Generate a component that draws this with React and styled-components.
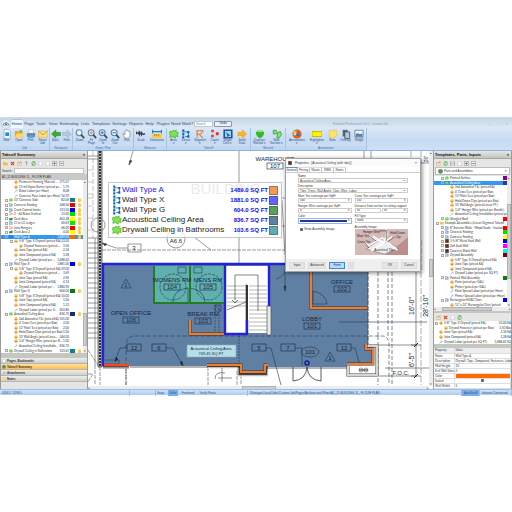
import React from "react";
import styled, { createGlobalStyle, css } from "styled-components";

const GlobalStyle = createGlobalStyle`
  body {
    margin: 0;
    background: #fff;
    font-family: "Liberation Sans", Arial, sans-serif;
    font-size: 3px;
    line-height: 4px;
    color: #333;
  }
  * { box-sizing: border-box; }
  button, input, select {
    font: inherit;
    color: inherit;
    margin: 0;
    padding: 0;
    border: 0;
    border-radius: 0;
    background: none;
    appearance: none;
    min-width: 0;
  }
  svg { display: block; }
`;

const Page = styled.div`
  padding: 117px 0;
`;

const Ribbon = styled.header`
  background: linear-gradient(#d5e3f2, #c3d9f2 30%, #b9d3f0);
  border-bottom: 1px solid #8fb2dc;
`;

const TopBar = styled.div`
  display: flex;
  align-items: center;
  height: 11px;
  padding: 1px 4px 0 1px;
  background: linear-gradient(#c6d5e6, #dce8f5);
  border-top: 1px solid #cfdae6;
`;

const Orb = styled.button`
  width: 10px;
  height: 9px;
`;

const Tab = styled.button`
  flex: 0 0 auto;
  width: ${props => props.$width}px;
  height: 9px;
  font-size: 4px;
  line-height: 8px;
  text-align: center;
  white-space: nowrap;
  color: #2a4d85;
  ${props =>
    props.$active &&
    css`
      background: #f1f7fe;
      border: solid #a9c5e6;
      border-width: 1px 0 0;
      border-radius: 2px 2px 0 0;
    `}
`;

const SearchBox = styled.input`
  width: 19px;
  height: 6px;
  margin-left: 1px;
  padding: 0 1px;
  background: #fff;
  border: 1px solid #bccbdc;
  &::placeholder { color: #777; opacity: 1; }
`;

const UndoButton = styled.button`
  width: 18px;
  height: 6px;
  margin-left: 1px;
  border: 1px solid #8c98a6;
  border-radius: 1px;
  background: #edf0f4;
  line-height: 3px;
`;

const AppTitle = styled.div`
  flex: 1;
  min-width: 0;
  padding: 0 4px;
  text-align: center;
  white-space: nowrap;
  color: #8b98a8;
`;

const WindowButtons = styled.div`
  display: flex;
  gap: 7px;
  color: #77869a;
`;

const Tools = styled.div`
  display: flex;
  height: 22px;
  background: linear-gradient(#d9e7f7, #c5daf3 60%, #cfe1f6);
`;

const ToolGroup = styled.div`
  display: flex;
  flex-direction: column;
  justify-content: space-between;
  border-right: 1px solid #a6c2e4;
`;

const ToolRow = styled.div`
  display: flex;
`;

const GroupLabel = styled.div`
  text-align: center;
  color: #4c6f9f;
  background: #bfd7f2;
`;

const ToolButton = styled.button`
  display: flex;
  flex-direction: column;
  align-items: center;
  width: ${props => props.$width}px;
  padding-top: 1px;
  line-height: 3px;
  text-align: center;
  white-space: nowrap;
  color: #2f4e7c;
  svg {
    width: 10px;
    height: 10px;
  }
`;

const Body = styled.main`
  display: grid;
  grid-template-columns: 88px minmax(0, 1fr) 79px;
`;

const Panel = styled.aside`
  display: flex;
  flex-direction: column;
  min-width: 0;
  background: #e4e4e2;
  border: solid #9a9a98;
  border-width: 0 1px;
`;

const PanelTitle = styled.div`
  display: flex;
  justify-content: space-between;
  height: 8px;
  padding: 0 2px 0 1px;
  font-size: 4px;
  line-height: 8px;
  font-weight: bold;
  color: #111;
  background: linear-gradient(#e8e8e6, #c2c2be);
  border-bottom: 1px solid #a5a5a2;
`;

const PanelTools = styled.div`
  display: flex;
  align-items: center;
  gap: 2px;
  height: 8px;
  padding: 0 2px;
  background: #e6e6e4;
`;

const IconButton = styled.button`
  width: 5px;
  height: 5px;
  svg {
    width: 5px;
    height: 5px;
  }
`;

const SearchRow = styled.label`
  display: flex;
  align-items: center;
  gap: 2px;
  height: 7px;
  padding: 0 3px 0 1px;
  input {
    flex: 1;
    height: 6px;
    background: #fff;
    border: 1px solid #c5c5c5;
  }
`;

const FileSelect = styled.select`
  width: 100%;
  height: 6px;
  padding: 0 1px;
  color: #333;
  background: #c9c9c6;
`;

const AssemblySelect = styled.div`
  display: flex;
  align-items: center;
  height: 8px;
  margin: 0 1px 1px;
  padding: 0 2px;
  gap: 1px;
  background: #fff;
  border: 1px solid #bbb;
  svg {
    width: 5px;
    height: 5px;
  }
  select { flex: 1; }
`;

const TreeFrame = styled.div`
  display: flex;
  height: ${props => props.$height}px;
  background: #fff;
`;

const TreeList = styled.ul`
  flex: 1;
  min-width: 0;
  display: flex;
  flex-direction: column;
  margin: 0;
  padding: 0;
  list-style: none;
  font-family: Lato, "Liberation Sans", sans-serif;
`;

const TreeItem = styled.li`
  flex: 1 1 0;
  min-height: 0;
  display: flex;
  align-items: center;
  padding-left: ${props => props.$level * 5 + props.$indent}px;
  gap: 1px;
  white-space: nowrap;
  color: ${props => (props.$selected ? "#fff" : "#333")};
  background: ${props => (props.$selected ? "#3399ee" : "none")};
  svg {
    flex: none;
    width: 4px;
    height: 4px;
  }
`;

const Expander = styled.span`
  flex: none;
  width: 3px;
  height: 3px;
  border: ${props => (props.$shown ? "1px solid #aaa" : "0")};
`;

const ItemLabel = styled.span`
  flex: 1;
  min-width: 0;
`;

const ItemValue = styled.span`
  flex: none;
  text-align: right;
`;

const Swatch = styled.span`
  flex: none;
  width: ${props => (props.$wide ? 5 : 4)}px;
  height: 4px;
  background: ${props => props.$color || "transparent"};
`;

const Bulb = styled.span`
  flex: none;
  width: 3px;
  height: 4px;
  margin: 0 2px;
  border-radius: 2px 2px 1px 1px;
  background: ${props => (props.$on ? "#ffc94a" : "transparent")};
`;

const Scrollbar = styled.div`
  flex: none;
  display: flex;
  flex-direction: ${props => (props.$horizontal ? "row" : "column")};
  justify-content: space-between;
  align-items: center;
  width: ${props => (props.$horizontal ? "100%" : "4px")};
  height: ${props => (props.$horizontal ? "4px" : "auto")};
  background: #ececec;
  color: #444;
`;

const Thumb = styled.span`
  width: ${props => props.$width || 4}px;
  height: ${props => props.$height || 4}px;
  margin: ${props => props.$margin || "0"};
  background: #cdcdcd;
  border: 1px solid #b2b2b2;
`;

const Splitter = styled.div`
  height: ${props => props.$size || 2}px;
  background: #c6c6c3;
`;

const NavButton = styled.button`
  display: flex;
  align-items: center;
  gap: 1px;
  width: 100%;
  height: 6px;
  padding: 0 1px;
  font-weight: bold;
  border-bottom: 1px solid #b5b5b2;
  background: ${props =>
    props.$active ? "linear-gradient(#ffe2a0, #ffbd4a)" : "linear-gradient(#ededeb, #cfcfcc)"};
  svg {
    width: 4px;
    height: 4px;
  }
`;

const PropertyTable = styled.table`
  flex: 1;
  width: 100%;
  table-layout: fixed;
  border-collapse: collapse;
  background: #fff;
  font-family: Lato, "Liberation Sans", sans-serif;
  th, td {
    height: 5px;
    padding: 0 0 0 1px;
    line-height: 4px;
    font-weight: normal;
    text-align: left;
    white-space: nowrap;
    border: 1px solid #dedede;
    border-width: 0 1px 1px 0;
  }
  th:first-child { width: 20px; }
  thead th { background: #eee; }
`;

const ColorCell = styled.span`
  display: block;
  height: 4px;
  background: #ff6a00;
`;

const CheckBox = styled.input`
  display: block;
  width: 3px;
  height: 3px;
  border: 1px solid #777;
  background: ${props => (props.checked ? "#444" : "#fff")};
  td & { margin: 0 auto; }
`;

const Canvas = styled.section`
  position: relative;
  display: grid;
  grid-template-columns: minmax(0, 1fr) 4px;
  grid-template-rows: auto 3px;
  background: #fff;
  overflow: hidden;
`;

const Drawing = styled.svg`
  width: 100%;
  height: 234px;
`;

const Legend = styled.div`
  position: absolute;
  left: 20px;
  top: 31px;
  display: flex;
  flex-direction: column;
  width: 174px;
  padding: 2px 3px;
  background: rgba(255, 255, 255, 0.75);
  border: 1px solid #c6c6c6;
`;

const LegendRow = styled.div`
  display: flex;
  align-items: center;
  height: 10px;
  font-size: 8px;
  line-height: 10px;
  color: ${props => (props.$selected ? "#1717ee" : "#1c1c22")};
  white-space: nowrap;
  svg {
    width: 10px;
    height: 10px;
  }
`;

const LegendValue = styled.span`
  margin-left: auto;
  font-size: 6px;
  font-weight: bold;
  color: #1010f0;
`;

const LegendColor = styled.span`
  width: 9px;
  height: 9px;
  margin-left: 1px;
  border: 1px solid rgba(60, 60, 60, 0.4);
  background: ${props => props.$color};
`;

const Dialog = styled.section`
  position: absolute;
  left: 197px;
  top: 7px;
  width: 136px;
  background: #fff;
  border: 1px solid #a2a2a2;
  box-shadow: 1px 1px 4px rgba(0, 0, 0, 0.5);
`;

const DialogTitle = styled.div`
  display: flex;
  align-items: center;
  gap: 3px;
  height: 8px;
  padding: 0 3px 0 2px;
  background: #fbfbfb;
  svg {
    width: 4px;
    height: 4px;
  }
  button { margin-left: auto; font-size: 4px; }
`;

const DialogTabs = styled.div`
  display: flex;
  border-bottom: 1px solid #ccc;
`;

const DialogTab = styled.button`
  width: 12px;
  height: 5px;
  border-right: 1px solid #c5c5c5;
  border-top: 1px solid ${props => (props.$active ? "#5599dd" : "#ddd")};
  line-height: 4px;
`;

const Form = styled.div`
  display: grid;
  grid-template-columns: 1fr 1fr;
  gap: 1px 3px;
  padding: 1px 12px 4px;
`;

const Field = styled.div`
  grid-column: ${props => (props.$full ? "1 / -1" : "auto")};
  display: flex;
  flex-direction: column;
  label {
    white-space: nowrap;
  }
`;

const fieldBox = css`
  flex: 1;
  height: 5px;
  padding: 0 1px;
  background: #fff;
  border: 1px solid #ccc;
  line-height: 3px;
`;

const TextBox = styled.input`
  ${fieldBox}
`;

const SelectBox = styled.select`
  ${fieldBox}
`;

const Control = styled.div`
  position: relative;
  display: flex;
  gap: 1px;
`;

const DropMark = styled.span`
  position: absolute;
  right: 2px;
  top: 0;
  line-height: 5px;
  pointer-events: none;
`;

const ColorButton = styled.button`
  flex: 1;
  height: 6px;
  border: 1px solid #8dbcec;
  padding: 1px 4px 1px 1px;
  background: #31318f content-box;
`;

const CheckLabel = styled.label`
  display: flex;
  align-items: center;
  gap: 1px;
  align-self: start;
  padding: 2px 0 0 2px;
`;

const AssemblyPicture = styled.svg`
  width: 100%;
  height: 26px;
`;

const DialogFooter = styled.div`
  display: flex;
  align-items: center;
  gap: 3px;
  height: 12px;
  padding: 0 3px;
  background: #efefef;
`;

const DialogButton = styled.button`
  width: ${props => props.$width || 16}px;
  height: 7px;
  margin-left: ${props => (props.$push ? "auto" : "0")};
  border: 1px solid ${props => (props.$active ? "#3a8ad8" : "#dcdcdc")};
  background: ${props => (props.$active ? "#b9dcfa" : "#e5e5e5")};
`;

const StatusBar = styled.footer`
  display: grid;
  grid-template-columns: 130px 26px 92px 1fr 18px 32px;
  height: 6px;
  line-height: 6px;
  color: #29518b;
  background: linear-gradient(#d3e4f8, #abcbf0);
  border-top: 1px solid #9dbce0;
  white-space: nowrap;
`;

const StatusCell = styled.span`
  padding-left: 2px;
  border-right: 1px solid #9fbee3;
  background: ${props => (props.$active ? "#78aee9" : "none")};
`;

const StatusOptions = styled.span`
  display: flex;
  gap: 3px;
  border-right: 1px solid #9fbee3;
`;

const StatusToggle = styled.button`
  padding: 0 1px;
  background: ${props => (props.$active ? "#78aee9" : "none")};
`;

const cube = (
  <>
    <path d="M3 7 12 2l9 5v11l-9 5-9-5z" fill="#e5942c" />
    <path d="m3 7 9 5 9-5-9-5z" fill="#ffd083" />
  </>
);
const nodes = (
  <>
    <path d="M5 3v18M5 7h13v11h-8" fill="none" stroke="#1879c4" strokeWidth="2" />
    <path d="M3 1h5v5H3zM3 10h5v5H3zM3 18h5v5H3zM15 5h5v5h-5zM15 15h5v6h-5z" fill="#0f67b2" />
  </>
);
const area = (
  <path d="M2 6h5l2-3 5 2 3-3v5l6 2-3 5 2 4-7-1v5l-7-4-6 2 1-6-2-3z" fill="#7fe34f" stroke="#3da42b" strokeWidth="1.5" />
);
const lens = (
  <>
    <circle cx="10" cy="9" r="7" fill="#e3f3ff" stroke="#68809c" strokeWidth="2.5" />
    <path d="m15 14 7 8" stroke="#3c4654" strokeWidth="4" />
  </>
);
const page = <path d="M5 1h10l5 5v17H5z" fill="#fff" stroke="#7f9cc1" strokeWidth="1.5" />;
const note = <path d="M3 3h18v12l-6 6H3z" fill="#ffe06a" stroke="#dcae2b" />;

const ICONS = {
  cube,
  nodes,
  area,
  note,
  page,
  new: <>{page}<path d="M8 8h9v9H8z" fill="#2788dc" /></>,
  open: <><path d="M2 5h8l2 3h9v13H2z" fill="#e9a62f" /><path d="M6 11h17l-4 10H2z" fill="#ffd767" /><path d="M13 3h7v5h-7z" fill="#5cbd4b" /></>,
  print: <><path d="M7 2h11v8H7z" fill="#fff" stroke="#96a5b8" /><path d="M2 10h20v9H2z" fill="#6f8296" /><path d="M6 15h12v7H6z" fill="#4ba9ef" /></>,
  mail: <><path d="M1 5h22v15H1z" fill="#ffe07c" stroke="#d6a52b" /><path d="m1 5 11 9L23 5" fill="none" stroke="#c89422" strokeWidth="2" /></>,
  back: <path d="M1 12 12 2v6h11v8H12v6z" fill="#38ae30" stroke="#21821d" />,
  forward: <path d="M23 12 12 2v6H1v8h11v6z" fill="#b9c9dc" stroke="#97abc3" />,
  lens,
  fit: <>{lens}<path d="M10 5v8M6 9h8" stroke="#e37230" strokeWidth="2" /></>,
  zoomIn: <>{lens}<path d="M10 5v8M6 9h8" stroke="#277fd2" strokeWidth="2.5" /></>,
  zoomOut: <>{lens}<path d="M6 9h8" stroke="#277fd2" strokeWidth="2.5" /></>,
  hand: <path d="M7 22 2 12l3-1 2 3V5l3-1V2h3v2h3v2h3v10l-3 6z" fill="#fff" stroke="#7b7b7b" strokeWidth="1.5" />,
  scale: <path d="M1 6v5l4-2 3 5V7l5 7V8l4 5 5-2" fill="none" stroke="#3d434b" strokeWidth="3" />,
  dimension: <><path d="M1 2v9M23 2v9M2 6h20" stroke="#2878bb" strokeWidth="3" /><path d="M1 12h22v10H1z" fill="#ffc833" /><path d="M6 12v5M11 12v5M16 12v5" stroke="#8a6516" strokeWidth="1.5" /></>,
  segment: <path d="M5 22V4h15M5 13h6l9-7M11 13l8 9" fill="none" stroke="#e07822" strokeWidth="3" strokeDasharray="4 1" />,
  count: <path d="M3 2h6v6H3zM3 14h6v6H3zM14 8h7v7h-7z" fill="#e83423" />,
  single: <><path d="M3 3h18v18H3z" fill="#b8d3ee" stroke="#165797" strokeWidth="4" /><path d="m8 7 10 9-5 1-2 4z" fill="#2368a6" /></>,
  send: <path d="M23 12 13 2v6H2v8h11v6z" fill="#ffb51e" stroke="#e28b0d" />,
  record: <><path d="M2 9c2-8 18-8 20 0-1 8-7 13-10 13S3 17 2 9z" fill="#35b82b" /><path d="M5 7c3-5 11-5 14 0z" fill="#98ea75" /></>,
  section: <path d="M3 3h7l2 5-3 4H3zM13 9l7-3 3 7-6 9h-5z" fill="#86e36a" stroke="#36a13a" strokeWidth="2" />,
  annotate: <><circle cx="12" cy="12" r="11" fill="#e85b26" /><path d="M4 8h7v7H4z" fill="#ffe051" /><path d="m12 6 7 11h-9z" fill="#2874c8" /><path d="M3 4h8v4H3z" fill="#9ce064" /></>,
  highlight: <path d="M0 6h24v12H0z" fill="#fff200" stroke="#c0b000" strokeWidth="2" />,
  overlay: <><path d="M4 2h12v16H4z" fill="#596875" /><path d="M9 7h12v16H9z" fill="#b6c8d7" stroke="#3c5162" strokeWidth="2" /></>,
  image: <><path d="M2 3h20v15H2z" fill="#e8f3fa" stroke="#687d93" strokeWidth="2" /><path d="M4 13c5-8 9 3 16-3v7H4z" fill="#4686c2" /><path d="M1 20h22v3H1z" fill="#8e9eae" /></>,
  labor: <path d="M3 22 15 9M14 3l-2 5 4 4 6-2" fill="none" stroke="#4b8fd0" strokeWidth="3" />,
  deck: <path d="M1 7h8l3-3h10l-2 16H1z" fill="#2d8a35" />,
  block: <path d="M2 2h20v20H2zM2 12h20M12 2v20" fill="#703b2a" stroke="#40221a" strokeWidth="2" />,
  folder: <path d="M1 4h9l2 4h11v13H1z" fill="#f5bd3f" />,
  remove: <path d="m4 4 16 16M20 4 4 20" stroke="#e03820" strokeWidth="5" />,
  refresh: <path d="M4 13a8 8 0 0 1 14-7M20 10a8 8 0 0 1-14 8M18 1v7h-7M6 22v-7h7" fill="none" stroke="#41a93e" strokeWidth="3.5" />,
  plus: <><path d="M2 2h20v20H2z" fill="#f5f5f5" stroke="#666" strokeWidth="2" /><path d="M12 6v12M6 12h12" stroke="#444" strokeWidth="3" /></>,
  minus: <><path d="M2 2h20v20H2z" fill="#f5f5f5" stroke="#666" strokeWidth="2" /><path d="M6 12h12" stroke="#444" strokeWidth="3" /></>,
  edit: <><path d="M2 6h18v16H2z" fill="#fff0bd" stroke="#9e977e" strokeWidth="2" /><path d="m8 15 12-13" stroke="#ed8528" strokeWidth="4" /></>,
  brackets: <path d="M7 2H3v20h4M17 2h4v20h-4M8 12h8" fill="none" stroke="#777" strokeWidth="2.5" />,
  up: <path d="M12 2v19M5 9l7-7 7 7" fill="none" stroke="#788aa0" strokeWidth="3" />,
  pie: <><circle cx="12" cy="12" r="11" fill="#35a94a" /><path d="M12 1a11 11 0 0 1 11 11H12z" fill="#3286d8" /><path d="M1 12A11 11 0 0 1 12 1v11z" fill="#e54632" /></>,
  orb: <><ellipse cx="12" cy="12" rx="11" ry="10" fill="#e9f0f8" stroke="#a6bad1" /><path d="M5 16a7 7 0 0 1 14 0M9 16a3 3 0 0 1 6 0M12 9v7" fill="none" stroke="#527294" strokeWidth="2" /></>
};

const Icon = ({ name }) => (
  <svg viewBox="0 0 24 24" aria-hidden="true">
    {ICONS[name]}
  </svg>
);

const TABS = [
  ["Home", 12], ["Page", 12], ["Tools", 12], ["View", 12], ["Estimating", 20], ["Lists", 12],
  ["Templates", 20], ["Settings", 17], ["Reports", 16], ["Help", 11], ["Plugins", 16], ["Need Work?", 22]
];

const GROUPS = [
  ["Job", [["New", "new", 13], ["Open", "open", 12], ["Print", "print", 11], ["Smart\nJob", "mail", 13]]],
  ["Navigator", [["Back", "back", 11], ["Find", "forward", 11]]],
  ["Zoom / Pan", [["Zoom", "lens", 13], ["Fit\nPage", "fit", 11], ["Zoom\nIn", "zoomIn", 12], ["Zoom\nOut", "zoomOut", 12], ["Pan", "hand", 12]]],
  ["Measure", [["Scale", "scale", 14], ["Dimension", "dimension", 18]]],
  ["Takeoff", [["Area\n▾", "area", 13], ["Linear\n▾", "nodes", 12], ["Segment\n▾", "segment", 16], ["Count\n▾", "count", 13], ["Single\nClick ▾", "single", 13], ["Send\nData", "send", 16]]],
  ["Record", [["Digitizer\nRecord ▾", "record", 17], ["New\nSection ▾", "section", 17]]],
  ["Annotations", [["Annotations\n▾", "annotate", 22], ["Highlighter\n▾", "highlight", 18], ["Note", "note", 13], ["Overlay", "overlay", 13], ["Image", "image", 14]]]
];

// level, icon, label, value, colour, selected
const TAKEOFF = [
  [1, "cube", "Perimeter Forming Material ...", "271.07"],
  [1, "cube", "15 mil Vapor Barrier (priced pe...", "1.75"],
  [1, "labor", "Rebar Labor (per Hour)", "8.08"],
  [1, "labor", "Concrete Pour Labor (per Hour)", "14.39"],
  [0, "area", "10\" Concrete Slab", "82.06", "#168080"],
  [0, "nodes", "Concrete Footing", "248.06", "#f00000"],
  [0, "nodes", "Crack Control Joints", "223.50", "#0000f0"],
  [0, "count", "2 - #4 Rebar Vertical", "23.00", "#00e000"],
  [0, "deck", "Deck Area", "662.28", "#ffff00"],
  [0, "nodes", "CJ In LO Ledger", "60.65", "#00f000"],
  [0, "count", "Joist Hangers", "46.00", "#f00000"],
  [0, "deck", "Deck Area 2", "0.00", "#ffff00"],
  [0, "nodes", "Wall Type A", "1,489.00", "#ff6a00", true],
  [1, "cube", "5/8\" Type X Drywall (priced EA)", "23.00"],
  [2, "cube", "Drywall Fasteners (priced ...", "3.50"],
  [1, "cube", "Joint Tape (priced EA)", "2.34"],
  [1, "cube", "Joint Compound (priced EA)", "3.28"],
  [1, "labor", "Drywall Labor (priced per ...", "1,488.40"],
  [0, "nodes", "Wall Type X", "1,881.00", "#0000f0"],
  [1, "cube", "5/8\" Type X Drywall (priced EA)", "29.00"],
  [2, "cube", "Drywall Fasteners (priced ...", "3.69"],
  [1, "cube", "Joint Tape (priced EA)", "2.96"],
  [1, "cube", "Joint Compound (priced EA)", "4.14"],
  [1, "labor", "Drywall Labor (priced per ...", "1,880.90"],
  [0, "nodes", "Wall Type G", "604.00", "#107810"],
  [1, "cube", "5/8\" Type X Drywall (priced EA)", "10.00"],
  [1, "cube", "Joint Tape (priced EA)", "1.00"],
  [1, "cube", "Joint Compound (priced EA)", "1.33"],
  [1, "labor", "Drywall Labor (priced per S...", "603.80"],
  [0, "area", "Acoustical Ceiling Area", "836.70", "#103070"],
  [1, "cube", "2x4 Acoustical Tile (priced EA)", "105.00"],
  [1, "cube", "4' Cross Tees (priced per Box)", "2.00"],
  [1, "cube", "12' Main Tees (priced per Box)", "2.00"],
  [1, "cube", "Hold Down Clips (priced per Box)", "1.00"],
  [1, "cube", "10' Wall Angle (priced Linea...", "244.00"],
  [1, "cube", "1/4\" Hanger Wire (priced per B...", "1.00"],
  [1, "labor", "Acoustical Ceiling Installatio...", "836.70"],
  [0, "area", "Drywall Ceiling in Bathrooms", "103.61", "#168080"]
];

const PARTS = [
  [1, "area", "Painted Surface", "", "#800080"],
  [1, "area", "Acoustical Ceiling Area", "", "#3333a0", true],
  [2, "cube", "2x4 Acoustical Tile (priced EA)"],
  [2, "cube", "4' Cross Tees (priced per Box)"],
  [2, "cube", "12' Main Tees (priced per Box)"],
  [2, "cube", "Hold Down Clips (priced per Box)"],
  [2, "cube", "10' Wall Angle (priced Linear FT)"],
  [2, "cube", "1/4\" Hanger Wire (priced per Bundle)"],
  [2, "labor", "Acoustical Ceiling Installation (priced per"],
  [1, "area", "Shingled Roof", "", "#f00000"],
  [0, "folder", "Example Assemblies (Linear/Segment Takeoff"],
  [1, "nodes", "8\" Exterior Walls - Wood Studs - Insulate", "", "#f00000"],
  [1, "nodes", "Concrete Footing", "", "#00e000"],
  [1, "nodes", "Concrete Footing", "", "#ffff00"],
  [1, "block", "3-5/8\" Metal Stud Wall", "", "#0000f0"],
  [1, "block", "2x6 Stud Wall", "", "#ff00ff"],
  [1, "block", "Concrete Block Wall", "", "#00f0f0"],
  [1, "nodes", "Drywall Assembly", "", "#800000"],
  [2, "cube", "5/8\" Type X Drywall (priced EA)"],
  [2, "cube", "Joint Tape (priced EA)"],
  [2, "cube", "Joint Compound (priced EA)"],
  [2, "labor", "Drywall Labor (priced per SQ FT)"],
  [1, "nodes", "Painted Wall Assembly", "", "#107810"],
  [2, "cube", "Paint (priced per GAL)"],
  [2, "cube", "Primer (priced per GAL)"],
  [2, "labor", "Paint Spread Labor (priced per Hour)"],
  [2, "labor", "Primer Spread Labor (priced per Hour)"],
  [1, "nodes", "Rectangular HVAC Duct", "", "#0000f0"],
  [2, "cube", "12\" x 10\" Rectangular Duct (priced"]
];

const INPUTS = [
  [0, "cube", "5/8\" Type X Drywall (priced EA)", "23.00 EA"],
  [1, "cube", "Drywall Fasteners (priced per Box)", "3.50 Box"],
  [0, "cube", "Joint Tape (priced EA)", "2.34 EA"],
  [0, "cube", "Joint Compound (priced EA)", "3.28 EA"],
  [0, "labor", "Drywall Labor (priced per SQ FT)", "1,488.40 SQ"]
];

const LEGEND = [
  ["nodes", "Wall Type A", "1489.0 SQ FT", "#f39a55", true],
  ["nodes", "Wall Type X", "1881.0 SQ FT", "#6464f8"],
  ["nodes", "Wall Type G", "604.0 SQ FT", "#5a9f5c"],
  ["area", "Acoustical Ceiling Area", "836.7 SQ FT", "#6080a3"],
  ["area", "Drywall Ceiling in Bathrooms", "103.6 SQ FT", "#5faeae"]
];

function Tree({ items, height, indent, bulbs, scroll }) {
  return (
    <TreeFrame $height={height}>
      <TreeList>
        {items.map(([level, icon, label, value, color, selected], i) => (
          <TreeItem key={i} $level={level} $indent={indent} $selected={selected}>
            <Expander $shown={!!color || items[i + 1]?.[0] > level} />
            <Icon name={icon} />
            <ItemLabel>{label}</ItemLabel>
            {value && <ItemValue>{value}</ItemValue>}
            {(bulbs || color) && <Swatch $color={color} $wide={bulbs} />}
            {bulbs && <Bulb $on={!!color} />}
          </TreeItem>
        ))}
      </TreeList>
      {scroll && (
        <Scrollbar>
          <span>▴</span>
          <Thumb $height={scroll.size} $margin={scroll.margin} />
          <span>▾</span>
        </Scrollbar>
      )}
    </TreeFrame>
  );
}

function PanelIcons({ names }) {
  return (
    <PanelTools>
      {names.map((name, i) => (
        <IconButton key={i} aria-label={name}>
          <Icon name={name} />
        </IconButton>
      ))}
    </PanelTools>
  );
}

function TopRibbon() {
  return (
    <Ribbon>
      <TopBar>
        <Orb aria-label="Application menu"><Icon name="orb" /></Orb>
        {TABS.map(([label, width], i) => (
          <Tab key={label} $width={width} $active={i === 0}>{label}</Tab>
        ))}
        <SearchBox placeholder="Search" aria-label="Search commands" />
        <UndoButton>Undo</UndoButton>
        <AppTitle>PlanSwift Professional 10.0 - Custom Job</AppTitle>
        <WindowButtons>
          <button aria-label="Minimize">–</button>
          <button aria-label="Maximize">□</button>
          <button aria-label="Close window">×</button>
        </WindowButtons>
      </TopBar>
      <Tools>
        {GROUPS.map(([name, tools]) => (
          <ToolGroup key={name}>
            <ToolRow>
              {tools.map(([label, icon, width]) => (
                <ToolButton key={label} $width={width}>
                  <Icon name={icon} />
                  {label.split("\n").map(line => <span key={line}>{line}</span>)}
                </ToolButton>
              ))}
            </ToolRow>
            <GroupLabel>{name}</GroupLabel>
          </ToolGroup>
        ))}
      </Tools>
    </Ribbon>
  );
}

const RoomTag = ({ x, y, name, number }) => (
  <g>
    <text x={x} y={y} fontSize="6">{name}</text>
    <rect x={x - 8} y={y + 2} width="16" height="6" fill="none" stroke="#14273e" strokeWidth=".6" />
    <text x={x} y={y + 7} fontSize="6">{number}</text>
  </g>
);

const KeyTag = ({ x, children }) => (
  <g>
    <rect x={x - 7} y="344" width="14" height="7" fill="none" stroke="#14273e" strokeWidth=".6" />
    <text x={x} y="350" fontSize="6">{children}</text>
  </g>
);

const range = (start, end, step) => {
  const out = [];
  for (let n = start; n < end; n += step) out.push(n);
  return out;
};

function FloorPlan() {
  return (
    <Drawing viewBox="88 151 341 234" preserveAspectRatio="xMinYMin slice">
      <g fill="none" stroke="#555" strokeWidth=".6">
        <path d="M88 156h10M88 159h10M239 151v112M133 151l-4 14M364 151v8M371 151v8M430 163h-9" />
        <path d="m129 165 1-5 2 1z" fill="#333" />
        <path d="M102 250h183" strokeDasharray="4 1" />
        <path d="M102 243l14 5h12M194 237l17 13M282 200l3 55M282 226h5M282 198h5" />
        <path d="m102 243 5 1-2 2z" fill="#333" />
        <circle cx="98" cy="225" r="7" />
        <circle cx="176" cy="239" r="9" />
        <rect x="128" y="244" width="13" height="8" />
        <path d="M93 151v87M88 198h5" strokeDasharray="5 2" stroke="#999" />
        {range(238, 342, 5).map(y => <path key={y} d={`M88 ${y}h10`} />)}
        {range(170, 236, 12).map(y => <path key={y} d={`M88 ${y}h5`} stroke="#aaa" />)}
        <path d="M95 238v127" />
        <path d="M88 350l10 15M95 365v20M100 367v18M126 367v18M208 367v18M237 371v14M241 375v10M88 374h5l-5 8" strokeDasharray="4 1" />
        <path d="M411 151v15M421 151v12M421 240v145" stroke="#777" strokeDasharray="6 2" />
      </g>
      <path d="M98 151v216h4V151z" fill="#bbb" stroke="#333" strokeWidth=".7" />
      <path d="M100 151v216" stroke="#333" strokeWidth="2" strokeDasharray="2 1" />

      <path d="M103 264H368v82h5v19h-26v2h-79v5h-27v-6H103z" fill="#6080a3" />
      <path d="M226 266h42v67h-42z" fill="#fff" />
      <path d="M154 266h71v37h-71z" fill="#5fb0ae" />

      {/* stairs */}
      <g stroke="#888" strokeWidth=".6" fill="none">
        {range(286, 333, 4).map(y => <path key={y} d={`M249 ${y}h18`} />)}
        {range(286, 308, 4).map(y => <path key={y} d={`M227 ${y}h19`} />)}
        <path d="M235 275h23v36M246 284v50M235 275v25M227 310l19-8" stroke="#333" />
        <path d="m232 300 3 3 3-3" stroke="#222" />
        <path d="M247 285v35" stroke="#333" strokeWidth="2" />
      </g>

      <g fill="none" stroke="#20364f" strokeWidth=".6">
        <path d="M126 385v-40q0-9 10-9h246q7 0 7 9v40M378 272v64M388 272v64M378 336v49M392 272v113" strokeDasharray="4 2" />
        <path d="M215 302v30M219 305v28M239 336v35" strokeDasharray="2 1" />
        <path d="M173 302q0-12 15-14v14M190 288q14 2 15 14" />
        <circle cx="173" cy="287" r="13" strokeDasharray="3 1" />
        <circle cx="209" cy="287" r="13" strokeDasharray="3 1" />
        <path d="M178 267h8v6h-8zM194 267h8v6h-8z" />
        <path d="m126 279-5 9h10zM330 352l-5 9h10z" />
        <path d="M215 305h6v6h-6zM215 305l6 6M127 348h-7l-5 13M166 348h7l10 18M266 348h5l10 37M295 348h7v18M351 348h4l5 18" />
        <path d="m313 291v13h14q-1-10-14-13M276 279q10-3 10-12M285 270v19M339 322h22M361 322h66" />
        <ellipse cx="310" cy="352" rx="9" ry="5" />
        <path d="m284 286 1 5 1-5zM182 361l1 5-3-3zM116 357l-1 5 3-3z" fill="#152b52" />
        <circle cx="307" cy="363" r="2" strokeWidth="1.5" stroke="#15208f" />
        <path d="M105 360h14v4h-14" />
      </g>

      {/* outer walls */}
      <g fill="none">
        <path d="M103 367h26M207 366h32v8h27v-7" stroke="#444" strokeWidth="3" />
        <path d="M103 368h26M207 368h31v8h30v-7" stroke="#ddd" />
        <path d="M130 367h78M268 368h79" stroke="#444" strokeWidth=".8" />
        <path d="M367 346h10v29h-29v-9" stroke="#444" strokeWidth="3" />
        <path d="M367 346h10v29h-29v-9" stroke="#d5d5d5" strokeWidth="2" />
        <path d="M267 306h4v29h-4z" fill="#e9e9e9" stroke="#555" strokeWidth=".7" />
        <path d="M368 264v80" stroke="#444" strokeDasharray="5 1" />
        <path d="M103 366v-102h182M225 264v70h22v-14M269 264v42" stroke="#2222d8" strokeWidth="2.4" />
        <path d="M104 365h25" stroke="#f04a28" strokeWidth="2.5" />
        <path d="M190 320v14h34M311 272v36h56M207 365h34v7h24v-7h3M366 344v5h7v15h-26" stroke="#4b2b16" strokeWidth="2.8" />
        <path d="M190 320v14h34M311 272v36h56M207 365h34v7h24v-7h3M366 344v5h7v15h-26" stroke="#ee7d2d" strokeWidth="2" />
        <path d="M154 266v38M190 266v38M153 303h71" stroke="#247c24" strokeWidth="2" />
        <path d="M293 367v14q13-1 14-14 1 13 14 14v-14" stroke="#333" strokeWidth=".8" />
        <path d="M215 379q0-8 10-6M222 368v14M218 378h14M416 272v104M411 345h10M411 376h10M379 345h38M379 376h38M385 368h44" stroke="#444" strokeWidth=".6" />
        <path d="m414 347 4-4M414 378l4-4M359 370h9" stroke="#222" />
        <circle cx="361" cy="370" r="2" stroke="#555" strokeWidth=".6" />
        <circle cx="366" cy="370" r="2" stroke="#555" strokeWidth=".6" />
      </g>

      <g fill="#14273e" textAnchor="middle" fontFamily="Liberation Sans, sans-serif">
        <RoomTag x={275} y={161} name="WAREHOUSE" number="107" />
        <RoomTag x={131} y={315} name="OPEN OFFICE" number="106" />
        <RoomTag x={172} y={282} name="WOMENS RM" number="104" />
        <RoomTag x={208} y={282} name="MENS RM" number="105" />
        <RoomTag x={203} y={316} name="BREAK RM" number="103" />
        <RoomTag x={342} y={284} name="OFFICE" number="102" />
        <RoomTag x={312} y={321} name="LOBBY" number="101" />
        <KeyTag x={134}>12</KeyTag>
        <KeyTag x={159}>6</KeyTag>
        <KeyTag x={259}>5</KeyTag>
        <KeyTag x={288}>7</KeyTag>
        <KeyTag x={344}>12</KeyTag>
        <text x="310" y="354" fontSize="6">101</text>
        <text x="330" y="360" fontSize="6">1</text>
        <text x="126" y="287" fontSize="5">1</text>
        <text x="176" y="243" fontSize="6">A6.6</text>
        <text x="134" y="250" fontSize="6">3</text>
        <text x="401" y="375" fontSize="6">F.O.C.</text>
        <text transform="translate(414 306) rotate(-90)" fontSize="7">16'-0"</text>
        <text transform="translate(428 306) rotate(-90)" fontSize="7">28'-10"</text>
        <text transform="translate(414 360) rotate(-90)" fontSize="7">6'-5"</text>
        <text transform="translate(428 159) rotate(-90)" fontSize="5">20'</text>
        <text x="226" y="194" fontSize="15" fill="#aaa">BUILDING</text>
        <rect x="187" y="345" width="49" height="12" fill="#b7dfe8" stroke="#83afbd" strokeWidth=".6" />
        <text x="211" y="350" fontSize="4">Acoustical Ceiling Area</text>
        <text x="211" y="355" fontSize="4">749.45 SQ FT</text>
      </g>
    </Drawing>
  );
}

function PropertiesDialog() {
  return (
    <Dialog role="dialog" aria-label="Properties">
      <DialogTitle>
        <Icon name="block" />
        <span>Properties - [Acoustical Ceiling (with tabs)]</span>
        <button aria-label="Close">×</button>
      </DialogTitle>
      <DialogTabs>
        {["General", "Pricing", "Waste", "WBS", "Notes"].map((name, i) => (
          <DialogTab key={name} $active={i === 0}>{name}</DialogTab>
        ))}
      </DialogTabs>
      <Form>
        <Field $full>
          <label htmlFor="name">Name</label>
          <Control><TextBox id="name" defaultValue="Acoustical Ceiling Area" /><DropMark>⋯</DropMark></Control>
        </Field>
        <Field $full>
          <label htmlFor="description">Description</label>
          <Control><TextBox id="description" defaultValue="Tiles, Trees, Wall Angle, Clips, Wire, Labor" /><DropMark>⋯</DropMark></Control>
        </Field>
        <Field>
          <label htmlFor="main">Main Tee coverage per SqFt</label>
          <Control><SelectBox id="main"><option>480</option></SelectBox><DropMark>▾</DropMark></Control>
        </Field>
        <Field>
          <label htmlFor="cross">Cross Tee coverage per SqFt</label>
          <Control><SelectBox id="cross"><option>500</option></SelectBox><DropMark>▾</DropMark></Control>
        </Field>
        <Field>
          <label htmlFor="hanger">Hanger Wire coverage per SqFt</label>
          <Control><SelectBox id="hanger"><option>8</option></SelectBox><DropMark>▾</DropMark></Control>
        </Field>
        <Field>
          <label htmlFor="distance">Distance from anchor to ceiling support</label>
          <Control>
            <SelectBox id="distance"><option>36</option></SelectBox>
            <SelectBox aria-label="Distance unit"><option>IN</option></SelectBox>
            <DropMark>▾</DropMark>
          </Control>
        </Field>
        <Field>
          <label htmlFor="color">Color</label>
          <Control><ColorButton id="color" /><DropMark>▾</DropMark></Control>
        </Field>
        <Field>
          <label htmlFor="fill">Fill Type</label>
          <Control><SelectBox id="fill"><option>Solid</option></SelectBox><DropMark>▾</DropMark></Control>
        </Field>
        <CheckLabel><CheckBox type="checkbox" checked readOnly />Show Assembly Image</CheckLabel>
        <Field>
          <span>Assembly Image</span>
          <AssemblyPicture viewBox="0 0 53 26" preserveAspectRatio="xMidYMid slice">
            <rect width="53" height="26" fill="#d5b9b7" />
            <path d="M30 26 53 8v18z" fill="#bf8e8c" />
            <path d="m11 20 15-10 17 9-14 6z" fill="#eee" stroke="#777" strokeWidth=".6" />
            <path d="m13 17 14-8 15 12M18 7l10 7 4-9M28 14l-12 8M31 0v12M14 7l7 4M10 14l5 3M37 8l-6 4" fill="none" stroke="#fff" strokeWidth="1.5" />
            <path d="M31 1v11M24 2h7M14 7l7 5M10 14l4 5M39 8l-7 5" fill="none" stroke="#333" strokeWidth=".6" />
            <g fontSize="3" fill="#222">
              <text x="8" y="4">Hanger Wire</text>
              <text x="2" y="8">Main Tee</text>
              <text x="2" y="14">Cross Tee</text>
              <text x="35" y="5">Hold Down</text>
              <text x="40" y="9">Clip</text>
              <text x="19" y="22">Acoustical Tile</text>
            </g>
          </AssemblyPicture>
        </Field>
      </Form>
      <DialogFooter>
        <DialogButton>Input</DialogButton>
        <DialogButton $width={18}>Advanced</DialogButton>
        <DialogButton $active>Form</DialogButton>
        <DialogButton $width={6} aria-label="Expand">↔</DialogButton>
        <DialogButton $push>OK</DialogButton>
        <DialogButton>Cancel</DialogButton>
      </DialogFooter>
    </Dialog>
  );
}

function TakeoffPanel() {
  return (
    <Panel>
      <PanelTitle><span>Takeoff Summary</span><span>×</span></PanelTitle>
      <PanelIcons names={["folder", "remove", "edit", "up", "refresh", "page", "page", "plus", "minus"]} />
      <SearchRow>Search:<input type="text" /></SearchRow>
      <FileSelect aria-label="Page"><option>A2_11 BUILDING 11_ FLOOR PLAN</option></FileSelect>
      <Tree items={TAKEOFF} height={173} indent={4} bulbs scroll={{ size: 33, margin: "126px 0 0" }} />
      <Splitter $size={5} />
      <NavButton><Icon name="page" />Pages, Bookmarks</NavButton>
      <NavButton $active><Icon name="pie" />Takeoff Summary</NavButton>
      <NavButton><Icon name="labor" />Attachments</NavButton>
      <NavButton><Icon name="note" />Notes</NavButton>
    </Panel>
  );
}

function PartsPanel() {
  return (
    <Panel>
      <PanelTitle><span>Templates, Parts, Inputs</span><span>×</span></PanelTitle>
      <PanelIcons names={["edit", "refresh", "brackets", "page", "plus", "minus"]} />
      <AssemblySelect>
        <Icon name="pie" />
        <select aria-label="Library"><option>Parts and Assemblies</option></select>
        <span>▾</span>
      </AssemblySelect>
      <Tree items={PARTS} height={131} indent={2} scroll={{ size: 75, margin: "0" }} />
      <Scrollbar $horizontal><span>◂</span><Thumb $width={50} $margin="0 12px 0 0" /><span>▸</span></Scrollbar>
      <Splitter />
      <PanelIcons names={["edit", "remove", "page", "refresh"]} />
      <Tree items={INPUTS} height={23} indent={1} />
      <Splitter $size={4} />
      <PropertyTable>
        <thead><tr><th>Property</th><th>Value</th></tr></thead>
        <tbody>
          <tr><th>Name</th><td>Wall Type A</td></tr>
          <tr><th>Description</th><td>Drywall, Tape, Compound, Fasteners, Labor</td></tr>
          <tr><th>Wall Height</th><td>10</td></tr>
          <tr><th># of Wall Sides</th><td>2</td></tr>
          <tr><th>Color</th><td><ColorCell /></td></tr>
          <tr><th>Scaled</th><td><CheckBox type="checkbox" aria-label="Scaled" checked readOnly /></td></tr>
          <tr><th>Wall Width</th><td>5</td></tr>
        </tbody>
      </PropertyTable>
    </Panel>
  );
}

function App() {
  return (
    <Page>
      <GlobalStyle />
      <TopRibbon />
      <Body>
        <TakeoffPanel />
        <Canvas>
          <FloorPlan />
          <Scrollbar><span>▴</span><Thumb $height={18} /><span>▾</span></Scrollbar>
          <Scrollbar $horizontal><span>◂</span><Thumb $width={34} /><span>▸</span></Scrollbar>
          <Legend>
            {LEGEND.map(([icon, label, value, color, selected]) => (
              <LegendRow key={label} $selected={selected}>
                <Icon name={icon} />
                <span>{label}</span>
                <LegendValue>{value}</LegendValue>
                <LegendColor $color={color} />
              </LegendRow>
            ))}
          </Legend>
          <PropertiesDialog />
        </Canvas>
        <PartsPanel />
      </Body>
      <StatusBar>
        <StatusCell>4456.7, 3299.5</StatusCell>
        <StatusCell />
        <StatusOptions>
          <StatusToggle>Snap</StatusToggle>
          <StatusToggle $active>Ortho</StatusToggle>
          <StatusToggle>Freehand</StatusToggle>
          <StatusToggle>Verify Points</StatusToggle>
        </StatusOptions>
        <StatusCell>\Storages\Local\Jobs\Custom Job\Pages\Architectural Plans\A2_11 BUILDING 11_ FLOOR PLAN</StatusCell>
        <StatusCell $active>AutoScroll</StatusCell>
        <StatusCell>Internet Connected</StatusCell>
      </StatusBar>
    </Page>
  );
}

export default App;
